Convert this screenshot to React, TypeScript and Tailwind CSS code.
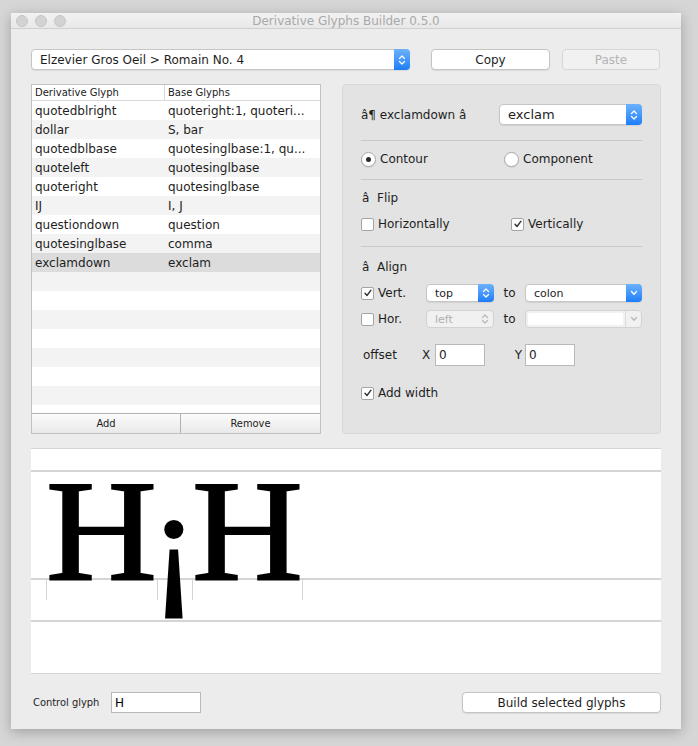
import { clsx } from 'clsx';

const UI = "font-['DejaVu_Sans',sans-serif]";
const COND = "font-['DejaVu_Sans_Condensed','DejaVu_Sans',sans-serif]";

const ROWS: [string, string][] = [
  ['quotedblright', 'quoteright:1, quoteri...'],
  ['dollar', 'S, bar'],
  ['quotedblbase', 'quotesinglbase:1, qu...'],
  ['quoteleft', 'quotesinglbase'],
  ['quoteright', 'quotesinglbase'],
  ['IJ', 'I, J'],
  ['questiondown', 'question'],
  ['quotesinglbase', 'comma'],
  ['exclamdown', 'exclam'],
];
const EMPTY_ROWS = 8;

function UpDown({ color = '#fff' }: { color?: string }) {
  return (
    <svg width="8" height="12" viewBox="0 0 8 12" fill="none" stroke={color} strokeWidth="1.3" strokeLinecap="round" strokeLinejoin="round">
      <path d="M1.5 4.5 L4 2 L6.5 4.5" />
      <path d="M1.5 7.5 L4 10 L6.5 7.5" />
    </svg>
  );
}

function Down({ color = '#fff' }: { color?: string }) {
  return (
    <svg width="8" height="6" viewBox="0 0 8 6" fill="none" stroke={color} strokeWidth="1.3" strokeLinecap="round" strokeLinejoin="round">
      <path d="M1.5 1.5 L4 4.2 L6.5 1.5" />
    </svg>
  );
}

type PopupKind = 'updown' | 'down' | 'disabled' | 'disabledDown';

function Popup({ value, className, kind = 'updown', text = 'text-[12px]' }: { value: string; className: string; kind?: PopupKind; text?: string }) {
  const disabled = kind === 'disabled' || kind === 'disabledDown';
  return (
    <div className={clsx('flex rounded-[4px] border', disabled ? 'border-[#d2d2d2] bg-[#f1f1f1]' : 'border-[#c6c6c6] bg-white shadow-[0_1px_1px_rgba(0,0,0,0.08)]', className)}>
      <div className={clsx('flex-1 flex items-center pl-[8px] leading-none truncate', text, disabled ? 'text-[#b0b0b0]' : 'text-[#1e1e1e]', kind === 'disabledDown' && 'bg-white m-[2px] rounded-[2px]')}>
        {value}
      </div>
      {kind === 'updown' && (
        <div className="w-[16px] -my-px -mr-px rounded-r-[4px] bg-gradient-to-b from-[#6ab2fc] to-[#1c7df9] flex items-center justify-center"><UpDown /></div>
      )}
      {kind === 'down' && (
        <div className="w-[16px] -my-px -mr-px rounded-r-[4px] bg-gradient-to-b from-[#6ab2fc] to-[#1c7df9] flex items-center justify-center"><Down /></div>
      )}
      {kind === 'disabled' && (
        <div className="w-[16px] flex items-center justify-center"><UpDown color="#b8b8b8" /></div>
      )}
      {kind === 'disabledDown' && (
        <div className="w-[16px] border-l border-[#dcdcdc] flex items-center justify-center"><Down color="#b8b8b8" /></div>
      )}
    </div>
  );
}

function Check({ checked, label, className }: { checked?: boolean; label: string; className?: string }) {
  return (
    <div className={clsx('flex items-center gap-[4px]', className)}>
      <div className="w-[13px] h-[13px] rounded-[2px] border border-[#a4a4a4] bg-white flex items-center justify-center">
        {checked && (
          <svg width="10" height="10" viewBox="0 0 10 10" fill="none" stroke="#333" strokeWidth="1.4" strokeLinecap="round" strokeLinejoin="round">
            <path d="M2 5.3 L4 7.5 L8 2.2" />
          </svg>
        )}
      </div>
      <span className="text-[12px] text-[#1e1e1e] leading-none">{label}</span>
    </div>
  );
}

function Radio({ on, label, className }: { on?: boolean; label: string; className?: string }) {
  return (
    <div className={clsx('flex items-center gap-[4px]', className)}>
      <div className="w-[15px] h-[15px] rounded-full border border-[#a8a8a8] bg-white flex items-center justify-center shadow-[0_1px_1px_rgba(0,0,0,0.08)]">
        {on && <div className="w-[5px] h-[5px] rounded-full bg-[#2a2a2a]" />}
      </div>
      <span className="text-[12px] text-[#1e1e1e] leading-none">{label}</span>
    </div>
  );
}

function GlyphTable() {
  return (
    <div className="w-[290px] h-[350px] border border-[#c2c2c2] bg-white flex flex-col">
      <div className="h-[16px] flex border-b border-[#dadada] text-[10px] text-[#222] leading-none">
        <div className="w-[132px] pl-[3px] flex items-center">Derivative Glyph</div>
        <div className="flex-1 border-l border-[#dadada] pl-[3px] flex items-center">Base Glyphs</div>
      </div>
      <div className="flex-1 overflow-hidden">
        {ROWS.map(([d, b], i) => (
          <div key={d} className={clsx('h-[19px] flex items-center pt-px text-[12px] text-[#1e1e1e] leading-none', i === 8 ? 'bg-[#dcdcdc]' : i % 2 ? 'bg-[#f3f3f3]' : 'bg-white')}>
            <div className="w-[133px] pl-[3px]">{d}</div>
            <div className="flex-1 pl-[3px] whitespace-nowrap">{b}</div>
          </div>
        ))}
        {Array.from({ length: EMPTY_ROWS }).map((_, i) => (
          <div key={i} className={clsx('h-[19px]', (i + 9) % 2 ? 'bg-[#f3f3f3]' : 'bg-white')} />
        ))}
      </div>
      <div className={clsx('h-[20px] flex border-t border-[#b2b2b2] text-[11px] text-[#222] leading-none', COND)}>
        <div className="w-[149px] border-r border-[#b2b2b2] bg-gradient-to-b from-[#fbfbfb] to-[#e9e9e9] flex items-center justify-center">Add</div>
        <div className="flex-1 bg-gradient-to-b from-[#fbfbfb] to-[#e9e9e9] flex items-center justify-center">Remove</div>
      </div>
    </div>
  );
}

function Sep({ className }: { className?: string }) {
  return <div className={clsx('h-px bg-[#c9c9c9]', className)} />;
}

function SettingsPanel() {
  return (
    <div className="w-[319px] h-[350px] rounded-[4px] border border-[#d8d8d8] bg-[#e3e3e3] px-[18px] pt-[19px] flex flex-col text-[12px] text-[#1e1e1e]">
      <div className="h-[21px] flex items-center justify-between">
        <span className="leading-none">â¶ exclamdown â</span>
        <Popup value="exclam" className="w-[143px] h-[21px]" text="text-[13px]" />
      </div>
      <Sep className="mt-[15px]" />
      <div className="mt-[8px] h-[20px] flex items-center">
        <Radio on label="Contour" className="w-[143px]" />
        <Radio label="Component" />
      </div>
      <Sep className="mt-[10px]" />
      <div className="mt-[10px] h-[16px] flex items-center leading-none pl-px">â&nbsp;&nbsp;Flip</div>
      <div className="mt-[10px] h-[16px] flex items-center">
        <Check label="Horizontally" className="w-[150px]" />
        <Check checked label="Vertically" />
      </div>
      <Sep className="mt-[14px]" />
      <div className="mt-[12px] h-[16px] flex items-center leading-none pl-px">â&nbsp;&nbsp;Align</div>
      <div className="mt-[9px] h-[18px] flex items-center">
        <Check checked label="Vert." className="w-[65px]" />
        <Popup value="top" className="w-[68px] h-[18px]" text="text-[11px]" />
        <span className="w-[31px] text-center leading-none">to</span>
        <Popup value="colon" kind="down" className="flex-1 h-[18px]" text="text-[11px]" />
      </div>
      <div className="mt-[8px] h-[18px] flex items-center">
        <Check label="Hor." className="w-[65px]" />
        <Popup value="left" kind="disabled" className="w-[68px] h-[18px]" text="text-[11px]" />
        <span className="w-[31px] text-center leading-none">to</span>
        <Popup value="" kind="disabledDown" className="flex-1 h-[18px]" />
      </div>
      <div className="mt-[16px] h-[22px] flex items-center">
        <span className="w-[61px] pl-[2px] leading-none">offset</span>
        <span className="w-[13px] leading-none">X</span>
        <div className="w-[50px] h-[22px] border border-[#b9b9b9] bg-white flex items-center pl-[3px] leading-none">0</div>
        <span className="w-[40px] text-right pr-[3px] leading-none">Y</span>
        <div className="w-[50px] h-[22px] border border-[#b9b9b9] bg-white flex items-center pl-[3px] leading-none">0</div>
      </div>
      <div className="mt-[19px] h-[16px] flex items-center">
        <Check checked label="Add width" />
      </div>
    </div>
  );
}

function Preview() {
  const serif = "'Liberation Serif', 'Times New Roman', serif";
  return (
    <div className="w-[630px] h-[226px] bg-white">
      <svg width="630" height="226" viewBox="0 0 630 226">
        <rect x="0" y="0" width="630" height="1" fill="#d6d6d6" />
        <rect x="0" y="22" width="630" height="2" fill="#d4d4d4" />
        <rect x="0" y="130" width="630" height="2" fill="#d4d4d4" />
        <rect x="0" y="172" width="630" height="2" fill="#d4d4d4" />
        <rect x="0" y="225" width="630" height="1" fill="#d6d6d6" />
        {[15, 126, 161, 271].map((x) => (
          <rect key={x} x={x} y="131" width="1" height="21" fill="#d4d4d4" />
        ))}
        <text x="15" y="131" textLength="111" lengthAdjust="spacingAndGlyphs" fontFamily={serif} fontSize="145" fill="#000" stroke="#000" strokeWidth="2">H</text>
        <text x="143" y="141" textAnchor="middle" fontFamily={serif} fontSize="145" fill="#000" stroke="#000" strokeWidth="2">¡</text>
        <text x="161" y="131" textLength="111" lengthAdjust="spacingAndGlyphs" fontFamily={serif} fontSize="145" fill="#000" stroke="#000" strokeWidth="2">H</text>
      </svg>
    </div>
  );
}

export default function App() {
  return (
    <div className={clsx('w-[698px] h-[746px] bg-[#d6d6d6] pl-[11px] pt-[13px]', UI)}>
      <div className="w-[670px] h-[716px] bg-[#ececec] flex flex-col shadow-[0_3px_12px_rgba(0,0,0,0.25)]">
        {/* title bar */}
        <div className="relative h-[16px] flex items-center border-b border-[#d0d0d0] bg-gradient-to-b from-[#f2f2f2] to-[#e8e8e8]">
          <div className="flex gap-[7px] pl-[5px]">
            {[0, 1, 2].map((i) => (
              <div key={i} className="w-[12px] h-[12px] rounded-full bg-[#d3d3d3] border border-[#c6c6c6]" />
            ))}
          </div>
          <div className="absolute inset-0 flex items-center justify-center text-[12px] text-[#a9a9a9] leading-none">Derivative Glyphs Builder 0.5.0</div>
        </div>

        <div className="px-[20px] pt-[20px] flex flex-col">
          <div className="h-[21px] flex">
            <Popup value="Elzevier Gros Oeil > Romain No. 4" className="w-[379px] h-[21px]" />
            <div className="ml-[21px] w-[119px] h-[21px] rounded-[4px] border border-[#c4c4c4] bg-white shadow-[0_1px_1px_rgba(0,0,0,0.08)] flex items-center justify-center text-[12px] text-[#1e1e1e] leading-none">Copy</div>
            <div className="ml-[12px] w-[98px] h-[21px] rounded-[4px] border border-[#d6d6d6] bg-[#f1f1f1] flex items-center justify-center text-[12px] text-[#b4b4b4] leading-none">Paste</div>
          </div>

          <div className="mt-[14px] flex gap-[21px]">
            <GlyphTable />
            <SettingsPanel />
          </div>

          <div className="mt-[14px]">
            <Preview />
          </div>

          <div className="mt-[18px] h-[21px] flex items-center">
            <span className={clsx('w-[80px] pl-[2px] text-[11px] text-[#1e1e1e] leading-none', COND)}>Control glyph</span>
            <div className="w-[90px] h-[21px] border border-[#b9b9b9] bg-white flex items-center pl-[3px] text-[12px] leading-none">H</div>
            <div className="ml-auto w-[199px] h-[21px] rounded-[4px] border border-[#c4c4c4] bg-white shadow-[0_1px_1px_rgba(0,0,0,0.08)] flex items-center justify-center text-[12px] text-[#1e1e1e] leading-none">Build selected glyphs</div>
          </div>
        </div>
      </div>
    </div>
  );
}
